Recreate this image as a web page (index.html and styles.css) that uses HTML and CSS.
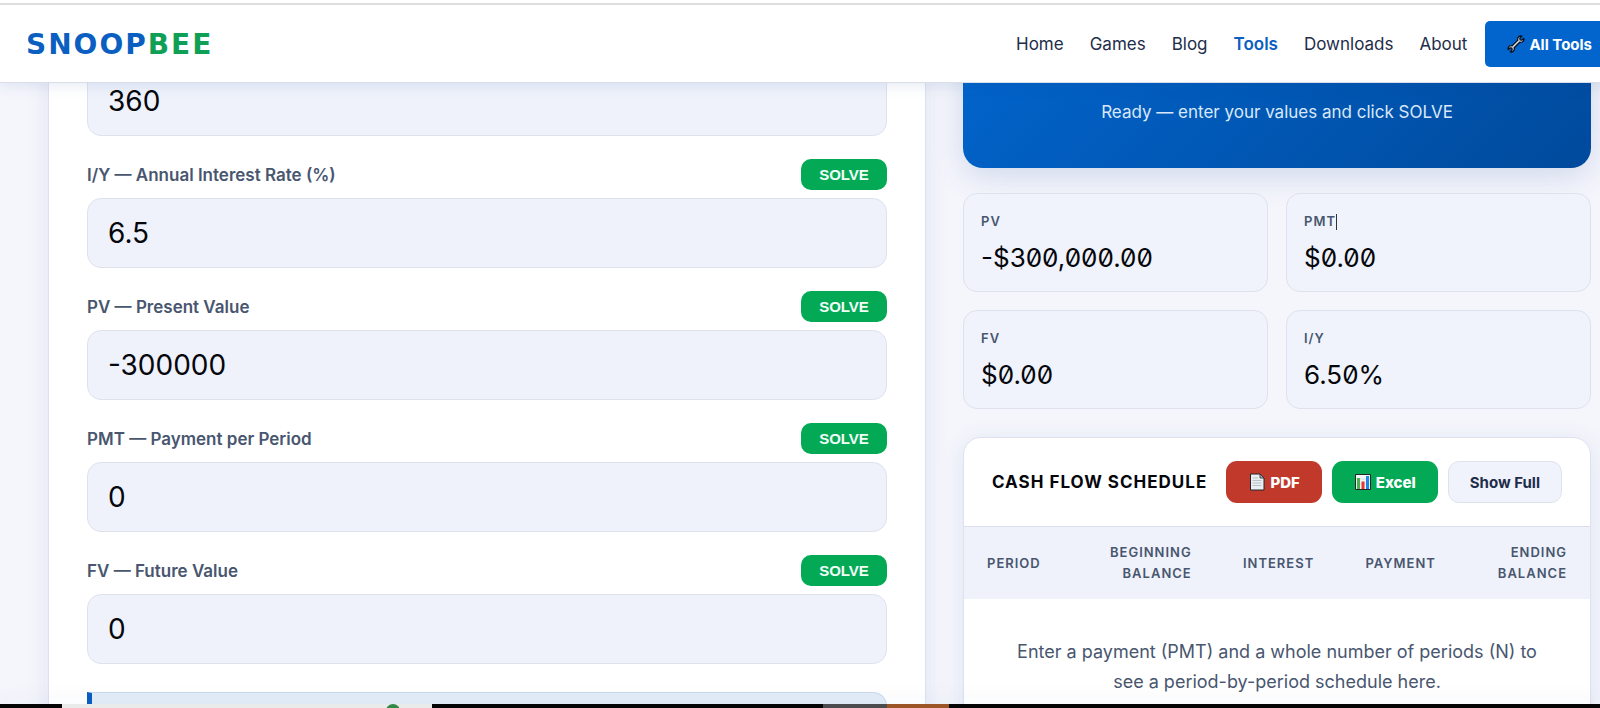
FILE: index.html
```html
<!DOCTYPE html>
<html lang="en">
<head>
<meta charset="utf-8">
<meta name="viewport" content="width=device-width, initial-scale=1">
<title>SnoopBee Financial Calculator</title>
<link rel="stylesheet" href="styles.css">
</head>
<body>
<header class="site-header">
  <a class="logo" href="#"><span>SNOOP</span><span class="logo-accent">BEE</span></a>
  <nav class="nav">
    <a href="#">Home</a>
    <a href="#">Games</a>
    <a href="#">Blog</a>
    <a href="#" class="active">Tools</a>
    <a href="#">Downloads</a>
    <a href="#">About</a>
    <a href="#" class="nav-cta">
      <svg class="icon" viewBox="0 0 18 18" aria-hidden="true">
        <path d="M16.800 3.300 14.900 5.200 13.200 4.800 12.800 3.100 14.700 1.200C13.200.800 11.700 1.300 11 2.600 10.500 3.500 10.500 4.400 10.800 5.300L5.300 10.800C4.400 10.500 3.500 10.500 2.600 11 1.300 11.700.800 13.200 1.200 14.700L3.100 12.800 4.800 13.200 5.200 14.900 3.300 16.800C4.800 17.200 6.300 16.700 7 15.400 7.500 14.500 7.500 13.600 7.200 12.700L12.700 7.200C13.600 7.500 14.500 7.500 15.400 7 16.700 6.300 17.200 4.800 16.800 3.300Z" fill="#c9d1d6" stroke="#0b1220" stroke-width="1.300" stroke-linejoin="round"/>
        <path d="M6 11.600 11.700 5.900" stroke="#f4f7f9" stroke-width=".8"/>
      </svg>
      <span>All Tools</span>
    </a>
  </nav>
</header>

<main class="page">
  <div class="layout">
    <form class="panel calculator">
      <div class="field">
        <input id="n" type="text" value="360" aria-label="N — Number of Periods">
      </div>
      <div class="field">
        <div class="field-head"><label for="iy">I/Y — Annual Interest Rate (%)</label><button type="button" class="solve">SOLVE</button></div>
        <input id="iy" type="text" value="6.5">
      </div>
      <div class="field">
        <div class="field-head"><label for="pv">PV — Present Value</label><button type="button" class="solve">SOLVE</button></div>
        <input id="pv" type="text" value="-300000">
      </div>
      <div class="field">
        <div class="field-head"><label for="pmt">PMT — Payment per Period</label><button type="button" class="solve">SOLVE</button></div>
        <input id="pmt" type="text" value="0">
      </div>
      <div class="field">
        <div class="field-head"><label for="fv">FV — Future Value</label><button type="button" class="solve">SOLVE</button></div>
        <input id="fv" type="text" value="0">
      </div>
      <div class="note"></div>
    </form>

    <div class="results">
      <section class="result-card"><p>Ready — enter your values and click SOLVE</p></section>

      <dl class="stats">
        <div class="stat"><dt>PV</dt><dd>-$300,000.00</dd></div>
        <div class="stat"><dt>PMT<span class="caret"></span></dt><dd>$0.00</dd></div>
        <div class="stat"><dt>FV</dt><dd>$0.00</dd></div>
        <div class="stat"><dt>I/Y</dt><dd>6.50%</dd></div>
      </dl>

      <section class="panel schedule">
        <div class="schedule-head">
          <h2>CASH FLOW SCHEDULE</h2>
          <div class="actions">
            <button type="button" class="btn btn-pdf">
              <svg class="icon" viewBox="0 0 18 18" aria-hidden="true">
                <path d="M2.500 1h9.500l4 4v12h-13.500z" fill="#eceff1" stroke="#20262b" stroke-width="1"/>
                <path d="M12 1v4h4z" fill="#b0bec5" stroke="#20262b" stroke-width=".8"/>
                <path d="M4.500 5h5.500M4.500 7.500h9M4.500 10h9M4.500 12.500h9" stroke="#b4bdc1" stroke-width=".9"/>
              </svg>
              <span>PDF</span>
            </button>
            <button type="button" class="btn btn-excel">
              <svg class="icon" viewBox="0 0 18 18" aria-hidden="true">
                <path d="M1.500 1.500h15v15h-15z" fill="#f3f6f7" stroke="#20262b" stroke-width="1"/>
                <path d="M2 6h14M2 11h14" stroke="#cfd8dc" stroke-width=".8"/>
                <path d="M3 5h3v11h-3z" fill="#4caf50"/>
                <path d="M7.500 8.500h3v7.500h-3z" fill="#e53935"/>
                <path d="M12 3h3v13h-3z" fill="#1e88e5"/>
              </svg>
              <span>Excel</span>
            </button>
            <button type="button" class="btn btn-plain">Show Full</button>
          </div>
        </div>
        <table class="schedule-table">
          <thead>
            <tr>
              <th scope="col">PERIOD</th>
              <th scope="col">BEGINNING BALANCE</th>
              <th scope="col">INTEREST</th>
              <th scope="col">PAYMENT</th>
              <th scope="col">ENDING BALANCE</th>
            </tr>
          </thead>
          <tbody>
            <tr><td colspan="5">Enter a payment (PMT) and a whole number of periods (N) to see a period-by-period schedule here.</td></tr>
          </tbody>
        </table>
      </section>
    </div>
  </div>
</main>

<footer class="taskbar">
  <span class="task-window"><span class="task-dot"></span></span>
  <span class="task-grey"></span>
  <span class="task-brown"></span>
</footer>
</body>
</html>
```
FILE: styles.css
```css
* {
  box-sizing: border-box;
}

body {
  margin: 0;
  height: 100vh;
  display: flex;
  flex-direction: column;
  overflow: hidden;
  background: #f5f6fc;
  color: #05070c;
  font-family: Inter, "Liberation Sans", sans-serif;
}

a {
  color: inherit;
  text-decoration: none;
}

button,
input {
  font-family: inherit;
}

.icon {
  width: 18px;
  height: 18px;
  flex: none;
}

/* Header */
.site-header {
  position: relative;
  z-index: 2;
  flex: none;
  display: flex;
  align-items: center;
  justify-content: space-between;
  height: 83px;
  margin-right: -16px;
  padding: 6px 0 0 26px;
  background: linear-gradient(#fff 3px, #dcdddf 3px, #dcdddf 5px, #fff 5px);
  border-bottom: 1px solid #d9deea;
  box-shadow: 0 2px 14px rgba(30, 70, 150, 0.12);
}

.logo {
  display: flex;
  color: #0a5fc0;
  font-family: "DejaVu Sans", sans-serif;
  font-size: 28px;
  font-weight: 700;
  letter-spacing: 2px;
}

.logo-accent {
  color: #0fa055;
}

.nav {
  display: flex;
  align-items: center;
  gap: 26px;
  color: #1e2d4a;
  font-size: 17px;
  font-weight: 400;
}

.nav .active {
  color: #0a5fc0;
  font-weight: 600;
}

.nav-cta {
  display: flex;
  align-items: center;
  gap: 4px;
  height: 46px;
  margin-left: -8px;
  padding: 0 24px 0 22px;
  border-radius: 5px;
  background: #0265cd;
  color: #fff;
  font-size: 15px;
  font-weight: 700;
}

/* Page, shown scrolled past the top of both columns */
.page {
  flex: 1;
  min-height: 0;
  overflow: hidden;
}

.layout {
  display: grid;
  grid-template-columns: 878fr 628fr;
  align-items: start;
  gap: 37px;
  margin-top: -56px;
  padding: 0 9px 0 48px;
}

.panel {
  border: 1px solid #dde2f0;
  border-radius: 18px;
  background: #fff;
  box-shadow: 0 4px 24px rgba(30, 70, 150, 0.1);
}

.calculator {
  display: flex;
  flex-direction: column;
  gap: 23px;
  padding: 38px;
}

.field {
  display: flex;
  flex-direction: column;
  gap: 8px;
}

.field-head {
  display: flex;
  align-items: center;
  justify-content: space-between;
}

.field label {
  color: #48566f;
  font-size: 17px;
  font-weight: 600;
}

.solve {
  width: 86px;
  height: 31px;
  padding: 0;
  border: 0;
  border-radius: 10px;
  background: #04a955;
  color: #f2fff8;
  font-family: "Liberation Sans", sans-serif;
  font-size: 15px;
  font-weight: 700;
}

.field input {
  width: 100%;
  height: 70px;
  padding: 0 20px;
  border: 1px solid #dde2ec;
  border-radius: 14px;
  background: #eff2fb;
  color: #05070c;
  font-size: 28px;
}

.note {
  height: 80px;
  margin-top: 5px;
  border: 1px solid #c9daee;
  border-left: 5px solid #0a5fc0;
  border-radius: 0 14px 14px 0;
  background: #e3ecf8;
}

/* Results */
.result-card {
  display: flex;
  align-items: flex-end;
  justify-content: center;
  height: 141px;
  padding: 42px;
  border-radius: 20px;
  background: linear-gradient(135deg, #0265cd, #004a9c);
  box-shadow: 0 8px 32px rgba(20, 60, 150, 0.16);
  color: #d9e8fa;
  font-size: 17px;
}

.result-card p {
  margin: 0;
  line-height: 27px;
}

.stats {
  display: grid;
  grid-template-columns: 1fr 1fr;
  gap: 18px;
  margin: 25px 0 28px;
}

.stat {
  padding: 17px 17px 15px;
  border: 1px solid #dde2ec;
  border-radius: 14px;
  background: #f0f3fb;
}

.stat dt {
  color: #48566f;
  font-size: 13px;
  font-weight: 600;
  letter-spacing: 1px;
  line-height: 21px;
}

.caret {
  display: inline-block;
  height: 16px;
  border-left: 1px solid #333;
  vertical-align: middle;
}

.stat dd {
  margin: 8px 0 0;
  font-size: 26px;
  font-variant-numeric: slashed-zero;
  line-height: 36px;
}

/* Schedule */
.schedule {
  overflow: hidden;
}

.schedule-head {
  display: flex;
  align-items: center;
  justify-content: space-between;
  padding: 23px 28px;
  border-bottom: 1px solid #d9deea;
}

.schedule h2 {
  margin: 0;
  font-size: 17px;
  font-weight: 700;
  letter-spacing: 1px;
  white-space: nowrap;
}

.actions {
  display: flex;
  gap: 10px;
}

.btn {
  display: flex;
  align-items: center;
  gap: 4px;
  height: 42px;
  padding: 0 21px;
  border: 1px solid transparent;
  border-radius: 11px;
  color: #fff;
  font-size: 15px;
  font-weight: 800;
  white-space: nowrap;
}

.btn-pdf {
  background: #c0392b;
}

.btn-excel {
  background: #04a955;
}

.btn-plain {
  border-color: #dde2ec;
  background: #f0f3fb;
  color: #1e2d4a;
  font-weight: 700;
}

.schedule-table {
  width: 100%;
  border-collapse: collapse;
}

.schedule-table th {
  padding: 15px 23px;
  background: #eff2fa;
  color: #48566f;
  font-size: 13px;
  font-weight: 600;
  letter-spacing: 1px;
  line-height: 21px;
  text-align: right;
}

.schedule-table th:first-child {
  text-align: left;
}

.schedule-table td {
  padding: 38px 48px;
  color: #48566f;
  font-size: 18px;
  line-height: 30px;
  text-align: center;
}

/* Bottom edge of the desktop */
.taskbar {
  position: relative;
  z-index: 2;
  flex: none;
  display: grid;
  grid-template-columns: 62fr 370fr 391fr 64fr 62fr 651fr;
  height: 4px;
  background: #050505;
  box-shadow: 0 -2px 20px rgba(30, 70, 150, 0.1);
}

.task-window {
  grid-column: 2;
  display: flex;
  justify-content: center;
  padding-left: 292px;
  overflow: hidden;
  background: #e9eaea;
}

.task-dot {
  width: 14px;
  height: 14px;
  border-radius: 50%;
  background: #2f8a45;
}

.task-grey {
  grid-column: 4;
  background: #4c4c4e;
}

.task-brown {
  grid-column: 5;
  background: #9c5526;
}
```
